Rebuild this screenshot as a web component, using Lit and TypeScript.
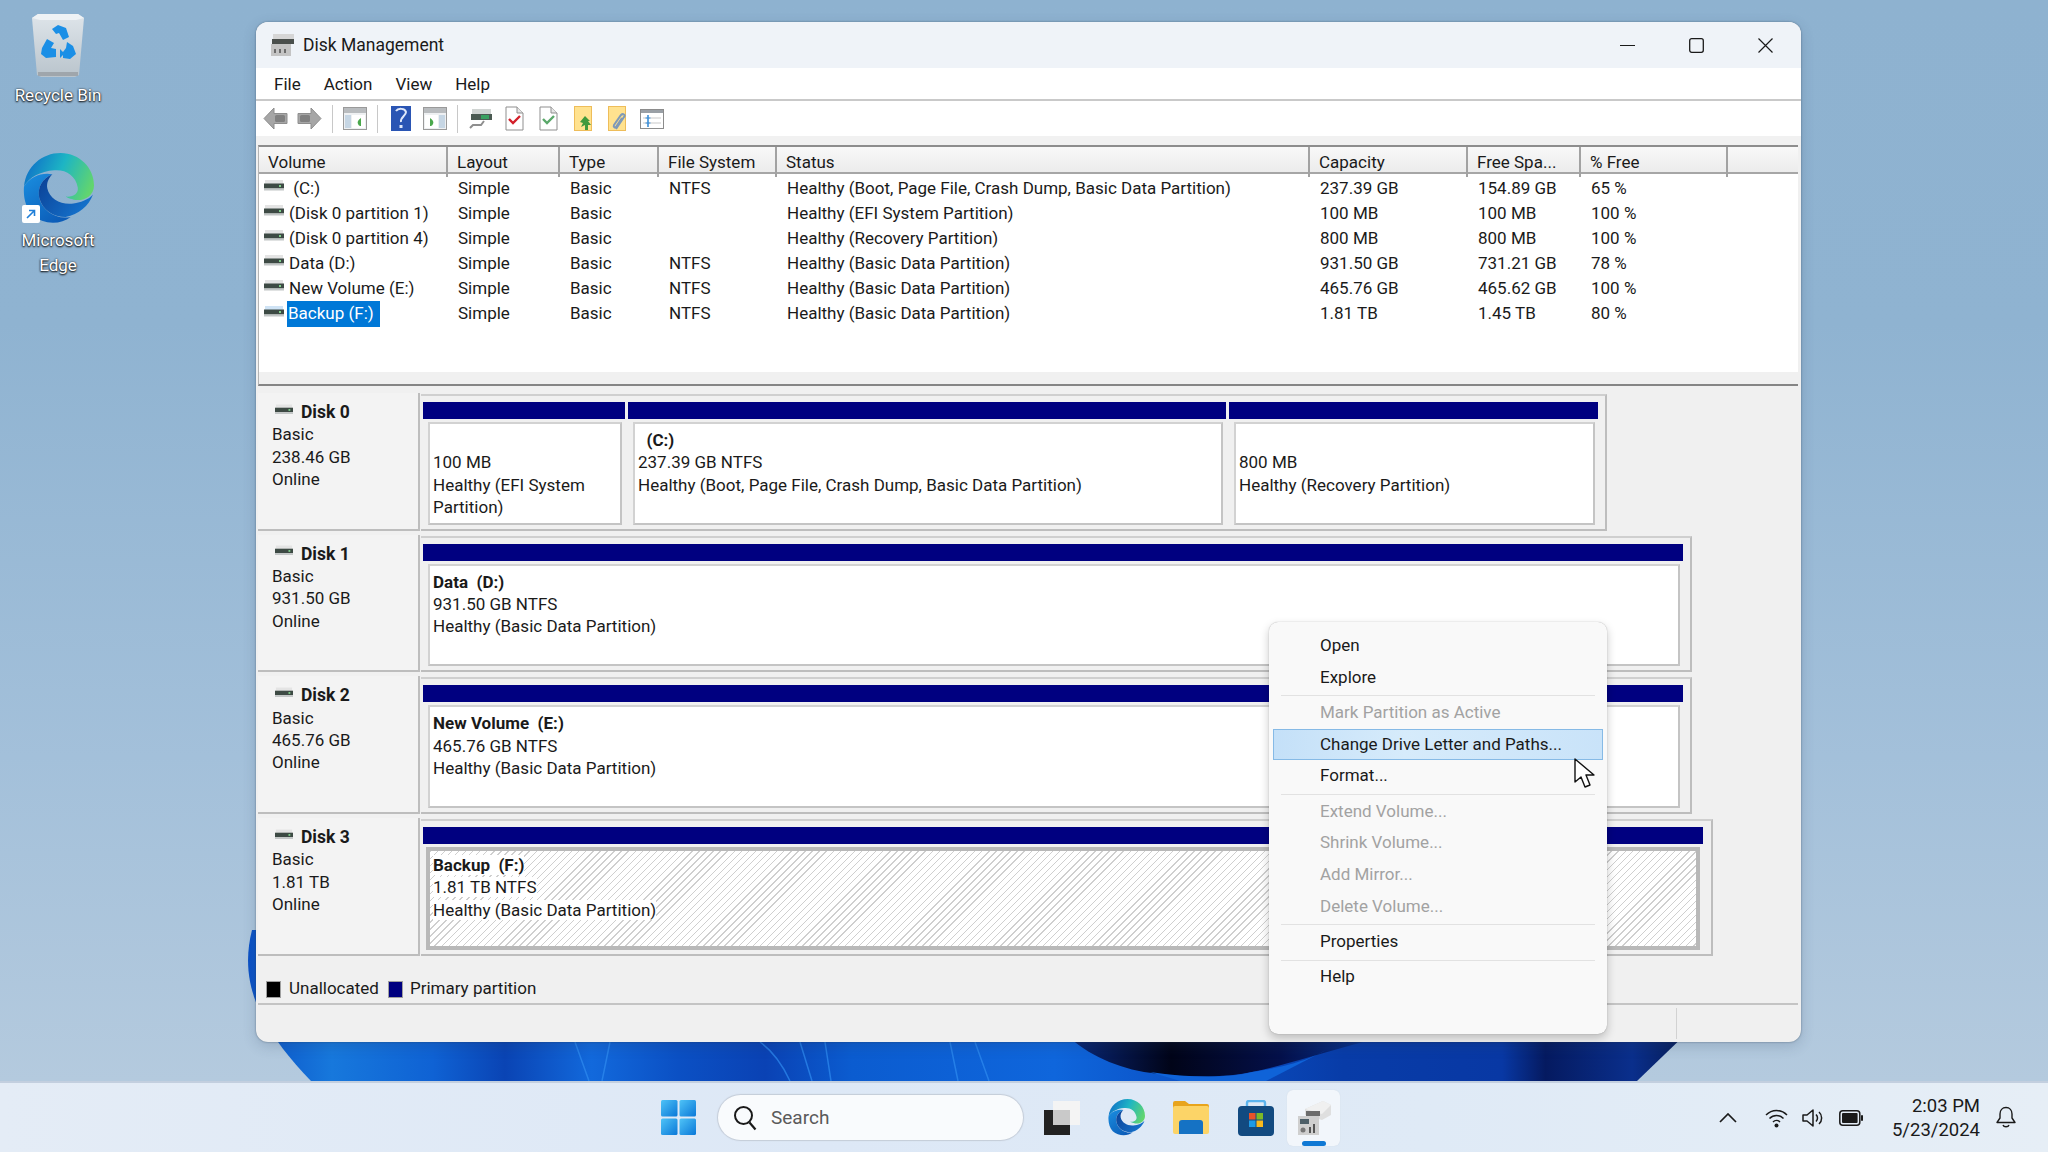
import { LitElement, html, css } from "lit";
import { customElement } from "lit/decorators.js";

const columns = ["Volume", "Layout", "Type", "File System", "Status", "Capacity", "Free Spa...", "% Free", ""];

const volumes = [
  { name: "\u00a0(C:)", fs: "NTFS", status: "Healthy (Boot, Page File, Crash Dump, Basic Data Partition)", cap: "237.39 GB", free: "154.89 GB", pct: "65 %" },
  { name: "(Disk 0 partition 1)", fs: "", status: "Healthy (EFI System Partition)", cap: "100 MB", free: "100 MB", pct: "100 %" },
  { name: "(Disk 0 partition 4)", fs: "", status: "Healthy (Recovery Partition)", cap: "800 MB", free: "800 MB", pct: "100 %" },
  { name: "Data (D:)", fs: "NTFS", status: "Healthy (Basic Data Partition)", cap: "931.50 GB", free: "731.21 GB", pct: "78 %" },
  { name: "New Volume (E:)", fs: "NTFS", status: "Healthy (Basic Data Partition)", cap: "465.76 GB", free: "465.62 GB", pct: "100 %" },
  { name: "Backup (F:)", fs: "NTFS", status: "Healthy (Basic Data Partition)", cap: "1.81 TB", free: "1.45 TB", pct: "80 %", selected: true },
];

type Part = { w: number; title?: string; lines: string[]; hatch?: boolean };

const disks: { name: string; size: string; w: number; parts: Part[] }[] = [
  {
    name: "Disk 0",
    size: "238.46 GB",
    w: 1180,
    parts: [
      { w: 202, title: "\u00a0", lines: ["100 MB", "Healthy (EFI System Partition)"] },
      { w: 598, title: "\u00a0\u00a0(C:)", lines: ["237.39 GB NTFS", "Healthy (Boot, Page File, Crash Dump, Basic Data Partition)"] },
      { w: 369, title: "\u00a0", lines: ["800 MB", "Healthy (Recovery Partition)"] },
    ],
  },
  {
    name: "Disk 1",
    size: "931.50 GB",
    w: 1265,
    parts: [{ w: 1260, title: "Data\u00a0\u00a0(D:)", lines: ["931.50 GB NTFS", "Healthy (Basic Data Partition)"] }],
  },
  {
    name: "Disk 2",
    size: "465.76 GB",
    w: 1265,
    parts: [{ w: 1260, title: "New Volume\u00a0\u00a0(E:)", lines: ["465.76 GB NTFS", "Healthy (Basic Data Partition)"] }],
  },
  {
    name: "Disk 3",
    size: "1.81 TB",
    w: 1286,
    parts: [{ w: 1280, title: "Backup\u00a0\u00a0(F:)", lines: ["1.81 TB NTFS", "Healthy (Basic Data Partition)"], hatch: true }],
  },
];

// null = separator
const menuItems: ({ label: string; off?: boolean; hot?: boolean } | null)[] = [
  { label: "Open" },
  { label: "Explore" },
  null,
  { label: "Mark Partition as Active", off: true },
  { label: "Change Drive Letter and Paths...", hot: true },
  { label: "Format..." },
  null,
  { label: "Extend Volume...", off: true },
  { label: "Shrink Volume...", off: true },
  { label: "Add Mirror...", off: true },
  { label: "Delete Volume...", off: true },
  null,
  { label: "Properties" },
  null,
  { label: "Help" },
];

const driveIcon = (top = "#e4e4e4", w = 20) => html`
  <svg class="drive" width=${w} height="11" viewBox="0 0 20 11">
    <rect x="1" y="0" width="18" height="4" fill=${top} />
    <rect x="0" y="3.5" width="20" height="5" fill="#3d4a44" />
    <rect x="0" y="8.5" width="20" height="2" fill="#c2c6c6" />
    <rect x="15" y="5" width="2" height="2" fill="#7fd08a" />
  </svg>
`;

const mmcWindow = (leafRight: boolean) => html`
  <svg width="24" height="25" viewBox="0 0 24 25">
    <rect x="0.5" y="1.5" width="23" height="22" fill="#eef0f2" stroke="#9a9a9a" />
    <rect x="1" y="2" width="22" height="5" fill="#b9bcbf" />
    <rect x=${leafRight ? 16 : 2} y="9" width="6" height="13" fill="#c6d6e4" />
    <rect x=${leafRight ? 2 : 9} y="9" width=${leafRight ? 13 : 13} height="13" fill="#fff" />
    <path
      d=${leafRight ? "M7 12c3 2 4 4 3 6-1 2-2 2-3 2z" : "M18 12c-3 2-4 4-3 6 1 2 2 2 3 2z"}
      fill="#4aa84c"
    />
  </svg>
`;

const docCheck = (color: string) => html`
  <svg width="19" height="25" viewBox="0 0 19 25">
    <path d="M1 1h11l6 6v17H1z" fill="#fff" stroke="#8f8f8f" />
    <path d="M12 1v6h6" fill="#e6e6e6" stroke="#8f8f8f" />
    <path d="M4 13l4 4 7-7" fill="none" stroke=${color} stroke-width="2.4" />
  </svg>
`;

const winLogo = html`
  <svg width="35" height="35" viewBox="0 0 35 35">
    <defs>
      <linearGradient id="wl" x1="0" y1="0" x2="1" y2="1">
        <stop offset="0" stop-color="#4fc3f7" />
        <stop offset="1" stop-color="#0a78d8" />
      </linearGradient>
    </defs>
    <rect x="0" y="0" width="16.5" height="16.5" rx="1.5" fill="url(#wl)" />
    <rect x="18.5" y="0" width="16.5" height="16.5" rx="1.5" fill="url(#wl)" />
    <rect x="0" y="18.5" width="16.5" height="16.5" rx="1.5" fill="url(#wl)" />
    <rect x="18.5" y="18.5" width="16.5" height="16.5" rx="1.5" fill="url(#wl)" />
  </svg>
`;

const edgeLogo = (id: string, size: number) => html`
  <svg width=${size} height=${size} viewBox="0 0 70 70">
    <defs>
      <linearGradient id="${id}a" x1="0" y1="0.3" x2="1" y2="0.6">
        <stop offset="0" stop-color="#0f6fc8" />
        <stop offset="0.5" stop-color="#1db5c4" />
        <stop offset="1" stop-color="#62d56e" />
      </linearGradient>
      <linearGradient id="${id}b" x1="0" y1="0" x2="0.7" y2="1">
        <stop offset="0" stop-color="#1a8fe0" />
        <stop offset="1" stop-color="#0c5cb8" />
      </linearGradient>
      <linearGradient id="${id}c" x1="0" y1="0" x2="1" y2="0.6">
        <stop offset="0" stop-color="#0b3f94" />
        <stop offset="1" stop-color="#1472cc" />
      </linearGradient>
    </defs>
    <path
      d="M1 33C3 13 19 0 37 0c19 0 33 15 33 32 0 11-11 16-20 14-5-1-8-3-8-3 7 1 13-3 12-9C52 22 42 16 31 17 17 18 6 24 1 33z"
      fill="url(#${id}a)"
    />
    <path
      d="M1 33c6-10 18-14 28-12-10 4-15 13-13 23 3 13 17 22 31 19-10 8-27 8-38-2C3 54 0 44 1 33z"
      fill="url(#${id}b)"
    />
    <path
      d="M16 44c-2-10 3-19 13-23-4 4-6 9-5 14 2 10 13 16 24 15 9-1 17-4 21-9-4 11-14 20-27 22-12 0-23-7-26-19z"
      fill="url(#${id}c)"
    />
  </svg>
`;

const recycleBin = html`
  <svg width="56" height="64" viewBox="0 0 56 64">
    <defs>
      <linearGradient id="rb" x1="0" y1="0" x2="0" y2="1">
        <stop offset="0" stop-color="#dfe5ea" />
        <stop offset="1" stop-color="#b9c4cc" />
      </linearGradient>
    </defs>
    <path d="M2 5l6-4h40l6 4-5 57-4 2H11l-4-2z" fill="url(#rb)" />
    <path d="M2 5l6-4h40l6 4-8 2H10z" fill="#eef2f5" />
    <rect x="8" y="59" width="40" height="4" fill="#9fa6ac" />
    <g fill="#1b8fe6">
      <path d="M22 16l6-4 8 3 3 9-6 3-4-7-3 1z" />
      <path d="M12 35l5-9 7 4-3 5 5 1v8l-10 1-5-4z" />
      <path d="M37 29l6 4 3 8-6 5-7-1v-3l-3 3v-9l3 3 3-4z" />
    </g>
  </svg>
`;

@customElement("app-root")
export class AppRoot extends LitElement {
  static override styles = css`
    :host {
      display: block;
      width: 2048px;
      height: 1152px;
      overflow: hidden;
      font-family: "Roboto", "Liberation Sans", sans-serif;
      color: #1a1a1a;
    }
    svg {
      display: block;
    }

    .screen {
      width: 2048px;
      height: 1152px;
      display: flex;
      flex-direction: column;
    }
    .desktop {
      position: relative;
      flex: 1;
      background: linear-gradient(180deg, #8eb2d0 0%, #8fb3d1 30%, #a3c0da 70%, #b4cade 100%);
    }
    .wallpaper {
      position: absolute;
      left: 0;
      top: 0;
    }

    .desk-icon {
      position: absolute;
      width: 104px;
      display: flex;
      flex-direction: column;
      align-items: center;
      color: #fff;
      font-size: 17px;
      line-height: 25px;
      text-align: center;
      text-shadow: 0 1px 2px #000, 0 0 2px #333;
    }
    .desk-icon.bin {
      left: 6px;
      top: 13px;
    }
    .desk-icon.edge {
      left: 6px;
      top: 153px;
    }
    .bin .art {
      margin-bottom: 6px;
    }
    .edge .art {
      position: relative;
      margin-bottom: 4px;
    }
    .shortcut {
      position: absolute;
      left: -1px;
      bottom: 1px;
      width: 18px;
      height: 18px;
      background: #fff;
      border-radius: 2px;
      display: flex;
      align-items: center;
      justify-content: center;
    }

    /* window */
    .win {
      position: absolute;
      left: 256px;
      top: 22px;
      width: 1545px;
      height: 1020px;
      border-radius: 12px;
      overflow: hidden;
      background: #f0f0f0;
      display: flex;
      flex-direction: column;
      box-shadow: 0 0 2px rgba(40, 60, 80, 0.6), 0 4px 14px rgba(40, 60, 90, 0.2);
    }
    .titlebar {
      height: 46px;
      flex: none;
      background: #eff3f8;
      display: flex;
      align-items: center;
      padding-left: 14px;
      gap: 9px;
      font-size: 17.5px;
    }
    .title-controls {
      margin-left: auto;
      display: flex;
      align-items: center;
      gap: 54px;
      padding-right: 28px;
    }
    .menubar {
      height: 33px;
      flex: none;
      background: #fff;
      border-bottom: 2px solid #c9c9c9;
      box-sizing: border-box;
      display: flex;
      align-items: center;
      padding-left: 18px;
      font-size: 17px;
    }
    .menubar span {
      margin-right: 23px;
    }
    .toolbar {
      height: 35px;
      flex: none;
      background: #fff;
      display: flex;
      align-items: center;
      padding-left: 2.5px;
    }
    .tool {
      width: 34.3px;
      display: flex;
      justify-content: center;
    }
    .tool-sep {
      width: 11px;
      height: 28px;
      display: flex;
      justify-content: center;
    }
    .tool-sep::before {
      content: "";
      width: 1px;
      background: #c8c8c8;
    }
    .toolband {
      height: 9px;
      flex: none;
      background: #f1f1f1;
    }

    .list {
      height: 241px;
      flex: none;
      margin: 0 3px 0 2px;
      background: #fff;
      border-top: 2px solid #8d8d8d;
      border-left: 1px solid #b4b4b4;
      border-bottom: 2px solid #858585;
      box-sizing: border-box;
      display: flex;
      flex-direction: column;
      font-size: 17px;
    }
    .cols {
      display: grid;
      grid-template-columns: 189px 112px 99px 118px 533px 158px 113px 147px 1fr;
    }
    .list-head {
      height: 27px;
      background: linear-gradient(180deg, #f8f8f8, #ececec);
      border-bottom: 2px solid #a6a6a6;
      box-sizing: border-box;
      line-height: 30px;
    }
    .list-head span {
      padding-left: 9px;
      border-right: 2px solid #a2a2a2;
      white-space: nowrap;
    }
    .list-head span:last-child {
      border-right: none;
    }
    .list-body {
      flex: 1;
      padding-top: 2px;
    }
    .row {
      height: 25.1px;
      line-height: 25.1px;
      white-space: nowrap;
    }
    .row span {
      padding-left: 10px;
    }
    .row .vol {
      display: flex;
      align-items: center;
      padding-left: 5px;
    }
    .vol .drive {
      margin-right: 4px;
      margin-top: -6px;
      flex: none;
    }
    .vol b {
      font-weight: 400;
      padding: 0 1px;
    }
    .vol b.sel {
      background: #0078d7;
      color: #fff;
      padding: 0 6px 0 1px;
      margin-left: -1px;
    }
    .band {
      height: 12px;
      background: #f0f0f0;
      margin-top: auto;
    }

    .disks {
      flex: 1;
      padding-top: 7px;
      margin-left: 2px;
      display: flex;
      flex-direction: column;
      gap: 4px;
      font-size: 17px;
      line-height: 22.3px;
      white-space: nowrap;
    }
    .disk {
      height: 137.7px;
      display: flex;
      flex: none;
    }
    .label {
      width: 162px;
      flex: none;
      box-sizing: border-box;
      padding: 8px 0 0 14px;
      background: #f3f3f3;
      border-right: 2px solid #bdbdbd;
      border-bottom: 2px solid #bdbdbd;
    }
    .disk-name {
      display: flex;
      align-items: center;
      font-weight: 700;
      font-size: 17.5px;
    }
    .disk-name .drive {
      margin: -6px 8px 0 3px;
    }
    .frame {
      margin: 1px 0 0 1px;
      box-sizing: border-box;
      display: flex;
      gap: 3px;
      padding: 6px 4px 4px 2px;
      border-top: 2px solid #cfcfcf;
      border-right: 2px solid #bdbdbd;
      border-bottom: 2px solid #bdbdbd;
    }
    .part {
      display: flex;
      flex-direction: column;
      flex: none;
    }
    .part-head {
      height: 17px;
      flex: none;
      background: #000080;
    }
    .part-body {
      flex: 1;
      margin: 3px 3px 0 5px;
      padding: 5px 4px 0 3px;
      background: #fff;
      border: 2px solid #d2d2d2;
      border-right-color: #c4c4c4;
      border-bottom-color: #c4c4c4;
      white-space: normal;
      overflow: hidden;
    }
    .part-body.hatch {
      margin-left: 3px;
      border: 4px solid #b8b8b8;
      padding: 3px 4px 0 3px;
      background: repeating-linear-gradient(135deg, #cfcfcf 0 1px, #fff 1px 5px);
    }
    .part-body p {
      margin: 0;
    }
    .part-body .hl {
      background: #fff;
    }
    .part-title {
      font-weight: 700;
    }

    .legend {
      height: 42px;
      flex: none;
      margin-left: 2px;
      margin-right: 3px;
      box-sizing: border-box;
      border-bottom: 2px solid #c4c4c4;
      display: flex;
      align-items: flex-end;
      padding: 0 0 5px 8px;
      font-size: 17px;
      line-height: 20px;
    }
    .swatch {
      width: 15px;
      height: 17px;
      margin-right: 8px;
      box-sizing: border-box;
      border: 1px solid #a0a0a0;
    }
    .swatch.black {
      background: #000;
    }
    .swatch.navy {
      background: #000080;
      margin-left: 9px;
      margin-right: 7px;
    }
    .status {
      height: 37px;
      flex: none;
      display: flex;
      justify-content: flex-end;
      padding-right: 124px;
    }
    .status::after {
      content: "";
      width: 1px;
      background: #d2d2d2;
      margin: 3px 0;
    }

    /* context menu */
    .menu {
      position: absolute;
      left: 1269px;
      top: 622px;
      width: 338px;
      height: 412px;
      box-sizing: border-box;
      padding: 8px 4px 0;
      background: #f9f9f9;
      border-radius: 9px;
      box-shadow: 0 0 1px rgba(0, 0, 0, 0.35), 0 4px 10px rgba(0, 0, 0, 0.22);
      font-size: 17px;
    }
    .mi {
      height: 31.7px;
      line-height: 31.7px;
      box-sizing: border-box;
      padding-left: 47px;
      color: #1a1a1a;
      white-space: nowrap;
    }
    .mi.off {
      color: #a2a2a2;
    }
    .mi.hot {
      background: linear-gradient(90deg, #c4e0f8, #d6ebfb 40%, #c9e3f9);
      box-shadow: inset 0 0 0 1px #86bae6;
    }
    .ms {
      height: 1px;
      background: #e2e2e2;
      margin: 1px 8px 1.6px;
      transform: translateY(1px);
      padding: 0;
    }
    .ms-wrap {
      height: 3px;
      padding: 0;
    }
    .cursor {
      position: absolute;
      left: 1574px;
      top: 758px;
    }

    /* taskbar */
    .taskbar {
      height: 71px;
      flex: none;
      box-sizing: border-box;
      border-top: 2px solid #c3cfdf;
      background: linear-gradient(90deg, #e4ecf6, #dde8f6 40%, #dfeaf6 70%, #e6eef6);
      display: flex;
      align-items: center;
      position: relative;
      padding-left: 661px;
    }
    .search {
      width: 305px;
      height: 45px;
      margin-left: 22px;
      box-sizing: border-box;
      border-radius: 23px;
      background: #f9fbfd;
      box-shadow: 0 0 1px 1px #c4ccd8;
      display: flex;
      align-items: center;
      padding-left: 15px;
      gap: 14px;
      font-size: 19px;
      color: #5a5a5a;
    }
    .task-icons {
      display: flex;
      align-items: center;
      margin-left: 21px;
    }
    .task-icon {
      width: 65px;
      display: flex;
      justify-content: center;
      margin-right: -0.3px;
    }
    .task-icon.first {
      width: 36px;
      margin-right: 14px;
      display: block;
    }
    .task-icon.active {
      position: relative;
      width: 53px;
      height: 56px;
      margin-left: -1px;
      background: #f2f6fb;
      border-radius: 6px;
      align-items: center;
      box-shadow: 0 0 1px #c8d2df;
    }
    .active::after {
      content: "";
      position: absolute;
      left: 15px;
      bottom: 0;
      width: 24px;
      height: 5px;
      border-radius: 3px;
      background: #0f78d4;
    }
    .tray {
      margin-left: auto;
      display: flex;
      align-items: center;
      padding-right: 32px;
    }
    .tray svg {
      flex: none;
    }
    .clock {
      margin: 0 16px 0 29px;
      text-align: right;
      font-size: 18.5px;
      line-height: 24px;
    }
    .wifi {
      margin: 0 14px 0 28px;
    }
    .sound {
      margin-right: 16px;
    }
  `;

  private renderToolbar() {
    const arrow = (flip: boolean) => html`
      <svg width="25" height="23" viewBox="0 0 25 23">
        <g transform=${flip ? "translate(25 0) scale(-1 1)" : ""}>
          <path d="M1 11.5L11 1v5.5h13v10H11V22z" fill="#a6a6a6" stroke="#8e8e8e" />
          <rect x="12" y="8" width="10" height="7" rx="1.5" fill="#808080" />
        </g>
      </svg>
    `;
    return html`
      <div class="toolbar">
        <div class="tool">${arrow(false)}</div>
        <div class="tool">${arrow(true)}</div>
        <div class="tool-sep"></div>
        <div class="tool">${mmcWindow(false)}</div>
        <div class="tool-sep"></div>
        <div class="tool">
          <svg width="20" height="25" viewBox="0 0 20 25">
            <rect width="20" height="25" fill="#2a55b4" />
            <path d="M5 5c2-3 9-3 10 1 0 4-6 5-5 10" fill="none" stroke="#dfe8fa" stroke-width="2" />
            <rect x="8.5" y="19" width="3" height="3" fill="#dfe8fa" />
          </svg>
        </div>
        <div class="tool">${mmcWindow(true)}</div>
        <div class="tool-sep"></div>
        <div class="tool">
          <svg width="23" height="25" viewBox="0 0 23 25">
            <rect x="3" y="3" width="19" height="5" fill="#d0d4d2" />
            <rect x="2" y="8" width="21" height="6" fill="#4b5a52" />
            <rect x="12" y="9" width="8" height="4" fill="#3aa060" />
            <path d="M1 22l3-3h8l3-4" fill="none" stroke="#8e8e8e" stroke-width="2" />
          </svg>
        </div>
        <div class="tool">${docCheck("#d3202a")}</div>
        <div class="tool">${docCheck("#5aa86a")}</div>
        <div class="tool">
          <svg width="19" height="25" viewBox="0 0 19 25">
            <rect x="0.5" y="0.5" width="17" height="24" fill="#ffe28f" stroke="#eebd5a" />
            <path d="M11 10l5 5-2 0 3 4-3 0v5h-3v-5l-4 2 2-4-3-1z" fill="#3f9a3c" />
          </svg>
        </div>
        <div class="tool">
          <svg width="19" height="25" viewBox="0 0 19 25">
            <rect x="0.5" y="0.5" width="17" height="24" fill="#ffe28f" stroke="#eebd5a" />
            <path d="M8 23l8-12c2-2-1-4-3-2L6 19c-1 2 1 3 2 2l6-9" fill="none" stroke="#7f9ab8" stroke-width="2" />
          </svg>
        </div>
        <div class="tool">
          <svg width="24" height="20" viewBox="0 0 24 20">
            <rect x="0.5" y="0.5" width="23" height="19" fill="#fff" stroke="#8c8c8c" />
            <rect x="1" y="1" width="22" height="3" fill="#9aa0a6" />
            <path d="M3 9h18M3 14h18" stroke="#c9c9c9" />
            <path d="M8 6v12" stroke="#3a8ed8" stroke-width="1.6" />
            <path d="M5.5 9h5M5.5 14h5" stroke="#3a8ed8" />
          </svg>
        </div>
      </div>
    `;
  }

  private renderList() {
    return html`
      <div class="list">
        <div class="cols list-head">${columns.map((c) => html`<span>${c}</span>`)}</div>
        <div class="list-body">
          ${volumes.map(
            (v) => html`
              <div class="cols row">
                <span class="vol">
                  ${driveIcon(v.selected ? "#cfe3f5" : "#e4e4e4")}
                  <b class=${v.selected ? "sel" : ""}>${v.name}</b>
                </span>
                <span>Simple</span>
                <span>Basic</span>
                <span>${v.fs}</span>
                <span>${v.status}</span>
                <span>${v.cap}</span>
                <span>${v.free}</span>
                <span>${v.pct}</span>
              </div>
            `
          )}
        </div>
        <div class="band"></div>
      </div>
    `;
  }

  private renderDisks() {
    return html`
      <div class="disks">
        ${disks.map(
          (d) => html`
            <div class="disk">
              <div class="label">
                <div class="disk-name">${driveIcon("#e4e4e4", 18)}${d.name}</div>
                <div>Basic</div>
                <div>${d.size}</div>
                <div>Online</div>
              </div>
              <div class="frame" style="width:${d.w + 6}px">
                ${d.parts.map(
                  (p) => html`
                    <div class="part" style="width:${p.w}px">
                      <div class="part-head"></div>
                      <div class="part-body ${p.hatch ? "hatch" : ""}">
                        <p class="part-title"><span class=${p.hatch ? "hl" : ""}>${p.title}</span></p>
                        ${p.lines.map((l) => html`<p><span class=${p.hatch ? "hl" : ""}>${l}</span></p>`)}
                      </div>
                    </div>
                  `
                )}
              </div>
            </div>
          `
        )}
      </div>
    `;
  }

  private renderMenu() {
    return html`
      <div class="menu">
        ${menuItems.map((m) =>
          m
            ? html`<div class="mi ${m.off ? "off" : ""} ${m.hot ? "hot" : ""}">${m.label}</div>`
            : html`<div class="ms"></div>`
        )}
      </div>
      <svg class="cursor" width="21" height="31" viewBox="0 0 21 31">
        <path d="M1 1v23l6-5 4 10 5-2-4-10h8z" fill="#fff" stroke="#111" stroke-width="1.4" stroke-linejoin="round" />
      </svg>
    `;
  }

  private renderTaskbar() {
    return html`
      <div class="taskbar">
        ${winLogo}
        <div class="search">
          <svg width="24" height="26" viewBox="0 0 24 26">
            <circle cx="10.5" cy="10.5" r="8.5" fill="none" stroke="#1a1a1a" stroke-width="2" />
            <path d="M16.5 17.5l6 7" stroke="#1a1a1a" stroke-width="2.2" />
          </svg>
          <span>Search</span>
        </div>
        <div class="task-icons">
          <div class="task-icon first">
            <svg width="36" height="34" viewBox="0 0 36 34">
              <rect x="0" y="9" width="26" height="25" fill="#222" />
              <rect x="9" y="0" width="27" height="24" fill="#f4f4f4" />
              <rect x="9" y="9" width="17" height="15" fill="#c9c9c9" />
            </svg>
          </div>
          <div class="task-icon">${edgeLogo("te", 37)}</div>
          <div class="task-icon">
            <svg width="36" height="33" viewBox="0 0 36 33">
              <path d="M0 2a2 2 0 0 1 2-2h10l4 3h18a2 2 0 0 1 2 2v4H0z" fill="#e8a41c" />
              <rect x="0" y="5" width="36" height="28" rx="2" fill="#fcd467" />
              <path d="M6 33V22a3 3 0 0 1 3-3h18a3 3 0 0 1 3 3v11z" fill="#1572c4" />
            </svg>
          </div>
          <div class="task-icon">
            <svg width="36" height="36" viewBox="0 0 36 36">
              <path d="M9 8V3a2 2 0 0 1 2-2h14a2 2 0 0 1 2 2v5" fill="none" stroke="#5cb4ee" stroke-width="2.4" />
              <rect x="0" y="6" width="36" height="30" rx="4" fill="#124a80" />
              <rect x="11" y="13" width="6.5" height="6.5" fill="#e8522a" />
              <rect x="18.5" y="13" width="6.5" height="6.5" fill="#7cb928" />
              <rect x="11" y="20.5" width="6.5" height="6.5" fill="#1d9ae6" />
              <rect x="18.5" y="20.5" width="6.5" height="6.5" fill="#f9b91c" />
            </svg>
          </div>
          <div class="task-icon active">
            <svg width="34" height="36" viewBox="0 0 34 36">
              <path d="M8 9l18-8 8 4v10l-9 5-17-5z" fill="#dfdfdf" />
              <path d="M8 9l17 5 9-9-8-4z" fill="#f0f0f0" />
              <rect x="9" y="11" width="14" height="5" fill="#6c6c6c" />
              <rect x="1" y="16" width="21" height="19" fill="#cfcfcf" />
              <rect x="3" y="19" width="9" height="5" fill="#4d5f68" />
              <path d="M13 27v6M17 24v9" stroke="#555" stroke-width="2" />
              <circle cx="6" cy="30" r="2.5" fill="#777" />
            </svg>
          </div>
        </div>
        <div class="tray">
          <svg width="18" height="10" viewBox="0 0 18 10">
            <path d="M1 9l8-8 8 8" fill="none" stroke="#1a1a1a" stroke-width="1.7" />
          </svg>
          <svg class="wifi" width="23" height="20" viewBox="0 0 23 20">
            <g fill="none" stroke="#1a1a1a" stroke-width="1.5">
              <path d="M1 7c6-6 15-6 21 0" />
              <path d="M4.5 10.5c4-4 10-4 14 0" />
              <path d="M8 14c2-2 5-2 7 0" />
            </g>
            <circle cx="11.5" cy="17.5" r="2" fill="#1a1a1a" />
          </svg>
          <svg class="sound" width="21" height="20" viewBox="0 0 21 20">
            <path d="M1 7h4l6-5v16l-6-5H1z" fill="none" stroke="#1a1a1a" stroke-width="1.5" stroke-linejoin="round" />
            <path d="M14 6.5c2 2 2 5 0 7M17 4c3.5 3 3.5 9 0 12" fill="none" stroke="#1a1a1a" stroke-width="1.5" />
          </svg>
          <svg width="24" height="16" viewBox="0 0 24 16">
            <rect x="0.8" y="0.8" width="20" height="14.4" rx="3" fill="none" stroke="#1a1a1a" stroke-width="1.5" />
            <rect x="3" y="3" width="15.6" height="10" rx="1" fill="#1a1a1a" />
            <rect x="22" y="5" width="2" height="6" rx="1" fill="#1a1a1a" />
          </svg>
          <div class="clock">
            <div>2:03 PM</div>
            <div>5/23/2024</div>
          </div>
          <svg width="20" height="23" viewBox="0 0 20 23">
            <path
              d="M10 1.5c-3.7 0-6 2.8-6 6.5v4l-3 4.5h18l-3-4.5V8c0-3.700-2.300-6.500-6-6.500z"
              fill="none"
              stroke="#1a1a1a"
              stroke-width="1.4"
              stroke-linejoin="round"
            />
            <path d="M7 19c.8 2.400 5.200 2.400 6 0" fill="none" stroke="#1a1a1a" stroke-width="1.4" />
          </svg>
        </div>
      </div>
    `;
  }

  override render() {
    return html`
      <div class="screen">
        <div class="desktop">
          <svg class="wallpaper" width="2048" height="1081" viewBox="0 0 2048 1081">
            <defs>
              <linearGradient id="bloom" x1="245" y1="0" x2="1690" y2="0" gradientUnits="userSpaceOnUse">
                <stop offset="0" stop-color="#0a4fc4" />
                <stop offset="0.06" stop-color="#1778dc" />
                <stop offset="0.13" stop-color="#0f62d4" />
                <stop offset="0.18" stop-color="#0a44b4" />
                <stop offset="0.24" stop-color="#1269dc" />
                <stop offset="0.3" stop-color="#0b50c4" />
                <stop offset="0.36" stop-color="#0a42b4" />
                <stop offset="0.42" stop-color="#0b5cd0" />
                <stop offset="0.56" stop-color="#0f66dc" />
                <stop offset="0.66" stop-color="#0a50c4" />
                <stop offset="0.76" stop-color="#083ca8" />
                <stop offset="0.87" stop-color="#0838a4" />
                <stop offset="0.9" stop-color="#051a60" />
                <stop offset="0.96" stop-color="#0a2f8c" />
                <stop offset="1" stop-color="#061a50" />
              </linearGradient>
              <linearGradient id="swoosh" x1="1062" y1="0" x2="1426" y2="0" gradientUnits="userSpaceOnUse">
                <stop offset="0" stop-color="#0a2a80" />
                <stop offset="0.3" stop-color="#010418" />
                <stop offset="0.6" stop-color="#04104a" />
                <stop offset="1" stop-color="#0b4cc0" />
              </linearGradient>
            </defs>
            <path d="M252 930C238 985 262 1030 311 1081H1637L1690 1030V930z" fill="url(#bloom)" />
            <path d="M1062 1030c20 22 50 36 82 42 40 6 80 6 108 0 50-10 130-40 174-42z" fill="url(#swoosh)" />
            <path d="M1150 1072c40 6 80 6 102 0 40-6 60-14 74-22l-60 31h-86z" fill="#0f63d8" />
            <g fill="none" stroke="#2f8cf0" stroke-width="1.5" opacity="0.7">
              <path d="M575 1042l14 39M610 1042l-8 39M760 1042c14 10 24 26 30 39M800 1042l12 39M825 1042l6 39M950 1042l8 39M975 1042l14 39" />
            </g>
          </svg>

          <div class="desk-icon bin">
            <div class="art">${recycleBin}</div>
            <span>Recycle Bin</span>
          </div>
          <div class="desk-icon edge">
            <div class="art">
              ${edgeLogo("de", 71)}
              <div class="shortcut">
                <svg width="12" height="12" viewBox="0 0 12 12">
                  <path d="M2 10l7-7M4 2.500h5.500V8" fill="none" stroke="#1f7fd8" stroke-width="1.6" />
                </svg>
              </div>
            </div>
            <span>Microsoft<br />Edge</span>
          </div>

          <div class="win">
            <div class="titlebar">
              <svg width="24" height="22" viewBox="0 0 24 22">
                <rect x="3" y="0" width="21" height="6" fill="#d6d6d6" />
                <rect x="2" y="5" width="22" height="5" fill="#4a4f4c" />
                <rect x="1" y="10" width="20" height="12" fill="#c4c4c4" />
                <path d="M5 15v4M10 15v4M15 15v4" stroke="#6d6d6d" stroke-width="2" />
              </svg>
              <span>Disk Management</span>
              <div class="title-controls">
                <svg width="15" height="15" viewBox="0 0 15 15">
                  <path d="M0 7.500h15" stroke="#1a1a1a" stroke-width="1.2" />
                </svg>
                <svg width="15" height="15" viewBox="0 0 15 15">
                  <rect x="0.700" y="0.700" width="13.600" height="13.600" rx="2" fill="none" stroke="#1a1a1a" stroke-width="1.3" />
                </svg>
                <svg width="15" height="15" viewBox="0 0 15 15">
                  <path d="M0.500 0.500l14 14M14.500 0.500l-14 14" stroke="#1a1a1a" stroke-width="1.2" />
                </svg>
              </div>
            </div>
            <div class="menubar">
              <span>File</span><span>Action</span><span>View</span><span>Help</span>
            </div>
            ${this.renderToolbar()}
            <div class="toolband"></div>
            ${this.renderList()} ${this.renderDisks()}
            <div class="legend">
              <div class="swatch black"></div>
              <span>Unallocated</span>
              <div class="swatch navy"></div>
              <span>Primary partition</span>
            </div>
            <div class="status"></div>
          </div>

          ${this.renderMenu()}
        </div>
        ${this.renderTaskbar()}
      </div>
    `;
  }
}

declare global {
  interface HTMLElementTagNameMap {
    "app-root": AppRoot;
  }
}
